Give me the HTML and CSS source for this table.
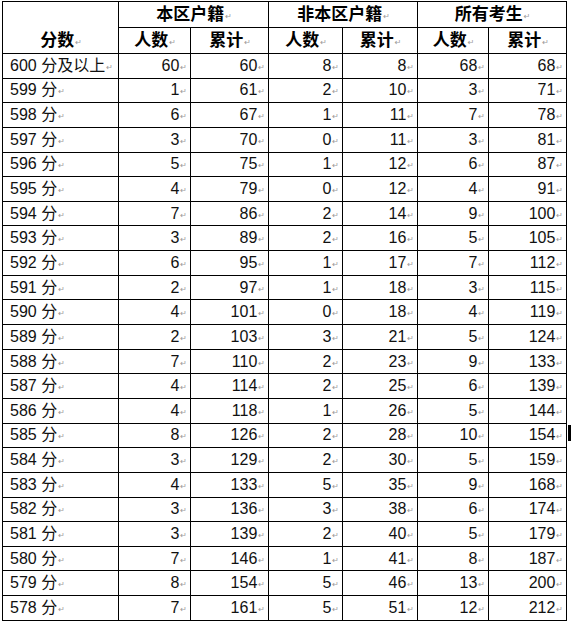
FILE: index.html
```html
<!DOCTYPE html>
<html lang="zh">
<head>
<meta charset="utf-8">
<title>分数统计</title>
<link rel="stylesheet" href="styles.css">
</head>
<body>
<table class="score">
<colgroup>
<col class="c-score"><col class="c-a"><col class="c-b"><col class="c-c"><col class="c-d"><col class="c-e"><col class="c-f"><col class="c-eol">
</colgroup>
<thead>
<tr class="h1">
<th rowspan="2" class="hscore">分数<span class="pm">↵</span></th>
<th colspan="2">本区户籍<span class="pm">↵</span></th>
<th colspan="2">非本区户籍<span class="pm">↵</span></th>
<th colspan="2">所有考生<span class="pm">↵</span></th>
<td class="eol"></td>
</tr>
<tr class="h2">
<th>人数<span class="pm">↵</span></th><th>累计<span class="pm">↵</span></th>
<th>人数<span class="pm">↵</span></th><th>累计<span class="pm">↵</span></th>
<th>人数<span class="pm">↵</span></th><th>累计<span class="pm">↵</span></th>
<td class="eol"></td>
</tr>
</thead>
<tbody>
<tr><td class="lbl">600 分及以上<span class="pm">↵</span></td><td>60<span class="pm">↵</span></td><td>60<span class="pm">↵</span></td><td>8<span class="pm">↵</span></td><td>8<span class="pm">↵</span></td><td>68<span class="pm">↵</span></td><td>68<span class="pm">↵</span></td><td class="eol"></td></tr>
<tr><td class="lbl">599 分<span class="pm">↵</span></td><td>1<span class="pm">↵</span></td><td>61<span class="pm">↵</span></td><td>2<span class="pm">↵</span></td><td>10<span class="pm">↵</span></td><td>3<span class="pm">↵</span></td><td>71<span class="pm">↵</span></td><td class="eol"></td></tr>
<tr><td class="lbl">598 分<span class="pm">↵</span></td><td>6<span class="pm">↵</span></td><td>67<span class="pm">↵</span></td><td>1<span class="pm">↵</span></td><td>11<span class="pm">↵</span></td><td>7<span class="pm">↵</span></td><td>78<span class="pm">↵</span></td><td class="eol"></td></tr>
<tr><td class="lbl">597 分<span class="pm">↵</span></td><td>3<span class="pm">↵</span></td><td>70<span class="pm">↵</span></td><td>0<span class="pm">↵</span></td><td>11<span class="pm">↵</span></td><td>3<span class="pm">↵</span></td><td>81<span class="pm">↵</span></td><td class="eol"></td></tr>
<tr><td class="lbl">596 分<span class="pm">↵</span></td><td>5<span class="pm">↵</span></td><td>75<span class="pm">↵</span></td><td>1<span class="pm">↵</span></td><td>12<span class="pm">↵</span></td><td>6<span class="pm">↵</span></td><td>87<span class="pm">↵</span></td><td class="eol"></td></tr>
<tr><td class="lbl">595 分<span class="pm">↵</span></td><td>4<span class="pm">↵</span></td><td>79<span class="pm">↵</span></td><td>0<span class="pm">↵</span></td><td>12<span class="pm">↵</span></td><td>4<span class="pm">↵</span></td><td>91<span class="pm">↵</span></td><td class="eol"></td></tr>
<tr><td class="lbl">594 分<span class="pm">↵</span></td><td>7<span class="pm">↵</span></td><td>86<span class="pm">↵</span></td><td>2<span class="pm">↵</span></td><td>14<span class="pm">↵</span></td><td>9<span class="pm">↵</span></td><td>100<span class="pm">↵</span></td><td class="eol"></td></tr>
<tr><td class="lbl">593 分<span class="pm">↵</span></td><td>3<span class="pm">↵</span></td><td>89<span class="pm">↵</span></td><td>2<span class="pm">↵</span></td><td>16<span class="pm">↵</span></td><td>5<span class="pm">↵</span></td><td>105<span class="pm">↵</span></td><td class="eol"></td></tr>
<tr><td class="lbl">592 分<span class="pm">↵</span></td><td>6<span class="pm">↵</span></td><td>95<span class="pm">↵</span></td><td>1<span class="pm">↵</span></td><td>17<span class="pm">↵</span></td><td>7<span class="pm">↵</span></td><td>112<span class="pm">↵</span></td><td class="eol"></td></tr>
<tr><td class="lbl">591 分<span class="pm">↵</span></td><td>2<span class="pm">↵</span></td><td>97<span class="pm">↵</span></td><td>1<span class="pm">↵</span></td><td>18<span class="pm">↵</span></td><td>3<span class="pm">↵</span></td><td>115<span class="pm">↵</span></td><td class="eol"></td></tr>
<tr><td class="lbl">590 分<span class="pm">↵</span></td><td>4<span class="pm">↵</span></td><td>101<span class="pm">↵</span></td><td>0<span class="pm">↵</span></td><td>18<span class="pm">↵</span></td><td>4<span class="pm">↵</span></td><td>119<span class="pm">↵</span></td><td class="eol"></td></tr>
<tr><td class="lbl">589 分<span class="pm">↵</span></td><td>2<span class="pm">↵</span></td><td>103<span class="pm">↵</span></td><td>3<span class="pm">↵</span></td><td>21<span class="pm">↵</span></td><td>5<span class="pm">↵</span></td><td>124<span class="pm">↵</span></td><td class="eol"></td></tr>
<tr><td class="lbl">588 分<span class="pm">↵</span></td><td>7<span class="pm">↵</span></td><td>110<span class="pm">↵</span></td><td>2<span class="pm">↵</span></td><td>23<span class="pm">↵</span></td><td>9<span class="pm">↵</span></td><td>133<span class="pm">↵</span></td><td class="eol"></td></tr>
<tr><td class="lbl">587 分<span class="pm">↵</span></td><td>4<span class="pm">↵</span></td><td>114<span class="pm">↵</span></td><td>2<span class="pm">↵</span></td><td>25<span class="pm">↵</span></td><td>6<span class="pm">↵</span></td><td>139<span class="pm">↵</span></td><td class="eol"></td></tr>
<tr><td class="lbl">586 分<span class="pm">↵</span></td><td>4<span class="pm">↵</span></td><td>118<span class="pm">↵</span></td><td>1<span class="pm">↵</span></td><td>26<span class="pm">↵</span></td><td>5<span class="pm">↵</span></td><td>144<span class="pm">↵</span></td><td class="eol"></td></tr>
<tr><td class="lbl">585 分<span class="pm">↵</span></td><td>8<span class="pm">↵</span></td><td>126<span class="pm">↵</span></td><td>2<span class="pm">↵</span></td><td>28<span class="pm">↵</span></td><td>10<span class="pm">↵</span></td><td>154<span class="pm">↵</span></td><td class="eol"><span class="cursor"></span></td></tr>
<tr><td class="lbl">584 分<span class="pm">↵</span></td><td>3<span class="pm">↵</span></td><td>129<span class="pm">↵</span></td><td>2<span class="pm">↵</span></td><td>30<span class="pm">↵</span></td><td>5<span class="pm">↵</span></td><td>159<span class="pm">↵</span></td><td class="eol"></td></tr>
<tr><td class="lbl">583 分<span class="pm">↵</span></td><td>4<span class="pm">↵</span></td><td>133<span class="pm">↵</span></td><td>5<span class="pm">↵</span></td><td>35<span class="pm">↵</span></td><td>9<span class="pm">↵</span></td><td>168<span class="pm">↵</span></td><td class="eol"></td></tr>
<tr><td class="lbl">582 分<span class="pm">↵</span></td><td>3<span class="pm">↵</span></td><td>136<span class="pm">↵</span></td><td>3<span class="pm">↵</span></td><td>38<span class="pm">↵</span></td><td>6<span class="pm">↵</span></td><td>174<span class="pm">↵</span></td><td class="eol"></td></tr>
<tr><td class="lbl">581 分<span class="pm">↵</span></td><td>3<span class="pm">↵</span></td><td>139<span class="pm">↵</span></td><td>2<span class="pm">↵</span></td><td>40<span class="pm">↵</span></td><td>5<span class="pm">↵</span></td><td>179<span class="pm">↵</span></td><td class="eol"></td></tr>
<tr><td class="lbl">580 分<span class="pm">↵</span></td><td>7<span class="pm">↵</span></td><td>146<span class="pm">↵</span></td><td>1<span class="pm">↵</span></td><td>41<span class="pm">↵</span></td><td>8<span class="pm">↵</span></td><td>187<span class="pm">↵</span></td><td class="eol"></td></tr>
<tr><td class="lbl">579 分<span class="pm">↵</span></td><td>8<span class="pm">↵</span></td><td>154<span class="pm">↵</span></td><td>5<span class="pm">↵</span></td><td>46<span class="pm">↵</span></td><td>13<span class="pm">↵</span></td><td>200<span class="pm">↵</span></td><td class="eol"></td></tr>
<tr><td class="lbl">578 分<span class="pm">↵</span></td><td>7<span class="pm">↵</span></td><td>161<span class="pm">↵</span></td><td>5<span class="pm">↵</span></td><td>51<span class="pm">↵</span></td><td>12<span class="pm">↵</span></td><td>212<span class="pm">↵</span></td><td class="eol"></td></tr>
</tbody>
</table>
</body>
</html>
```
FILE: styles.css
```css
html, body {
  margin: 0;
  padding: 0;
  background: #fff;
  overflow: hidden;
}

.score {
  border-collapse: collapse;
  table-layout: fixed;
  width: 569px;
  margin: 1px 0 0 2px;
  font-family: "Liberation Sans", "Noto Sans CJK SC", sans-serif;
  font-size: 16px;
  color: #111;
}

.c-score { width: 116px; }
.c-a { width: 72px; }
.c-b { width: 78px; }
.c-c { width: 74px; }
.c-d { width: 75px; }
.c-e { width: 71px; }
.c-f { width: 78px; }
.c-eol { width: 5px; }

.score th,
.score td {
  border: 1px solid #000;
  padding: 0 3px 0 4px;
  white-space: nowrap;
  overflow: hidden;
  line-height: 18px;
}

.score th {
  font-family: "Noto Sans CJK SC", sans-serif;
  font-weight: 700;
  font-size: 17px;
  color: #000;
  text-align: center;
  vertical-align: bottom;
  padding-bottom: 1px;
  height: 24px;
}

.score tr.h1 { height: 25px; }
.score tr.h2 { height: 25px; }

.score tbody tr { height: 24.65px; }

.score tbody td {
  text-align: right;
  vertical-align: middle;
  padding-top: 2px;
  padding-bottom: 0;
}

.score tbody td.lbl {
  text-align: left;
  padding-left: 7px;
}

.pm {
  font-family: "DejaVu Sans", sans-serif;
  font-size: 8px;
  font-weight: 400;
  color: #9a9a9a;
  margin-left: 1px;
  vertical-align: 1px;
}

.score td.eol {
  border: none;
  padding: 0;
  vertical-align: middle;
}

.cursor {
  display: inline-block;
  width: 3px;
  height: 16px;
  background: #000;
  vertical-align: middle;
  margin-top: -6px;
}
```
